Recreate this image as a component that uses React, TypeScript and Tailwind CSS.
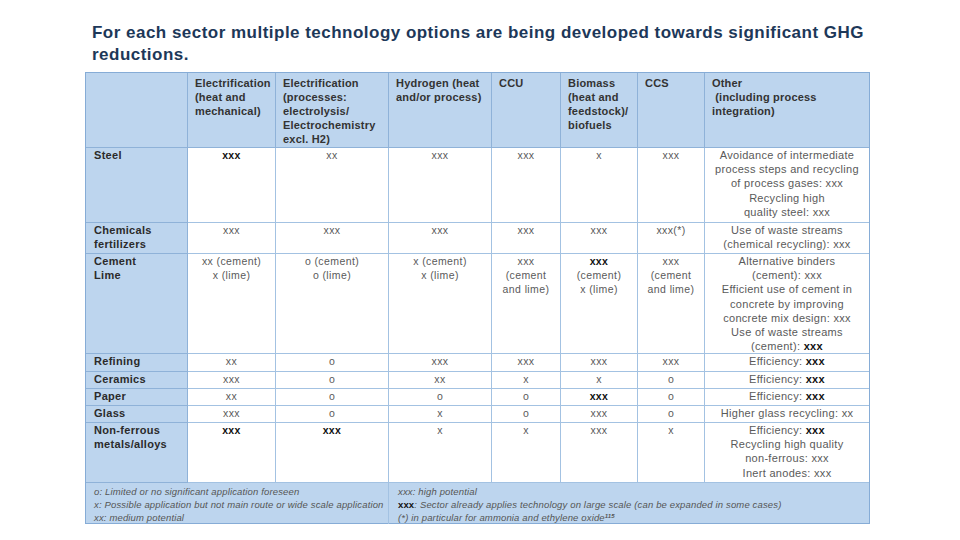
import React from "react";

type Cell = string[];

interface Row {
  label: string[];
  cells: Cell[];
  other: string[];
}

const COLS = "grid-cols-[102px_88px_113px_103px_69px_77px_67px_164px]";
const ROWS = "grid-rows-[75px_75px_31px_100px_18px_17px_17px_17px_60px]";

const headers: string[][] = [
  [],
  ["Electrification", "(heat and", "mechanical)"],
  ["Electrification", "(processes:", "electrolysis/", "Electrochemistry", "excl. H2)"],
  ["Hydrogen (heat", "and/or process)"],
  ["CCU"],
  ["Biomass", "(heat and", "feedstock)/", "biofuels"],
  ["CCS"],
  ["Other", "\u00a0(including process", "integration)"],
];

const rows: Row[] = [
  {
    label: ["Steel"],
    cells: [["**xxx**"], ["xx"], ["xxx"], ["xxx"], ["x"], ["xxx"]],
    other: [
      "Avoidance of intermediate",
      "process steps and recycling",
      "of process gases: xxx",
      "Recycling high",
      "quality steel: xxx",
    ],
  },
  {
    label: ["Chemicals", "fertilizers"],
    cells: [["xxx"], ["xxx"], ["xxx"], ["xxx"], ["xxx"], ["xxx(*)"]],
    other: ["Use of waste streams", "(chemical recycling): xxx"],
  },
  {
    label: ["Cement", "Lime"],
    cells: [
      ["xx (cement)", "x (lime)"],
      ["o (cement)", "o (lime)"],
      ["x (cement)", "x (lime)"],
      ["xxx", "(cement", "and lime)"],
      ["**xxx**", "(cement)", "x (lime)"],
      ["xxx", "(cement", "and lime)"],
    ],
    other: [
      "Alternative binders",
      "(cement): xxx",
      "Efficient use of cement in",
      "concrete by improving",
      "concrete mix design: xxx",
      "Use of waste streams",
      "(cement): **xxx**",
    ],
  },
  {
    label: ["Refining"],
    cells: [["xx"], ["o"], ["xxx"], ["xxx"], ["xxx"], ["xxx"]],
    other: ["Efficiency: **xxx**"],
  },
  {
    label: ["Ceramics"],
    cells: [["xxx"], ["o"], ["xx"], ["x"], ["x"], ["o"]],
    other: ["Efficiency: **xxx**"],
  },
  {
    label: ["Paper"],
    cells: [["xx"], ["o"], ["o"], ["o"], ["**xxx**"], ["o"]],
    other: ["Efficiency: **xxx**"],
  },
  {
    label: ["Glass"],
    cells: [["xxx"], ["o"], ["x"], ["o"], ["xxx"], ["o"]],
    other: ["Higher glass recycling: xx"],
  },
  {
    label: ["Non-ferrous", "metals/alloys"],
    cells: [["**xxx**"], ["**xxx**"], ["x"], ["x"], ["xxx"], ["x"]],
    other: [
      "Efficiency: **xxx**",
      "Recycling high quality",
      "non-ferrous: xxx",
      "Inert anodes: xxx",
    ],
  },
];

// "**xxx**" marks the bold parts of a line
function Line({ text }: { text: string }) {
  const parts = text.split(/(\*\*[^*]+\*\*)/);
  return (
    <div className="whitespace-nowrap">
      {parts.map((p, i) =>
        p.startsWith("**") ? (
          <b key={i} className="font-bold text-[#111]">
            {p.slice(2, -2)}
          </b>
        ) : (
          <span key={i}>{p}</span>
        )
      )}
    </div>
  );
}

export default function App() {
  return (
    <div className="w-[960px] h-[540px] bg-white font-['Liberation_Sans',Arial,sans-serif] overflow-hidden">
      <h1 className="pl-[92px] pt-[22px] text-[17px] leading-[22px] tracking-[0.48px] font-bold text-[#1d3859]">
        For each sector multiple technology options are being developed towards significant GHG
        <br />
        reductions.
      </h1>

      <div className="ml-[85px] mt-[6px] w-[785px] border border-[#86acd6]">
        <div className={`grid ${COLS} ${ROWS}`}>
          {headers.map((h, i) => (
            <div
              key={i}
              className={`bg-[#bdd5ee] border-b border-[#8fb2d8] px-[7px] pt-[3px] text-[11px] leading-[14px] tracking-[0.2px] font-bold text-[#333] ${
                i < 7 ? "border-r" : ""
              }`}
            >
              {h.map((l, j) => (
                <Line key={j} text={l} />
              ))}
            </div>
          ))}

          {rows.map((r, ri) => (
            <React.Fragment key={ri}>
              <div className="bg-[#bdd5ee] border-b border-r border-[#8fb2d8] pl-[8px] pt-[1px] text-[11px] leading-[13.5px] tracking-[0.3px] font-bold text-[#2b2b2b]">
                {r.label.map((l, j) => (
                  <div key={j}>{l}</div>
                ))}
              </div>
              {r.cells.map((c, ci) => (
                <div
                  key={ci}
                  className="bg-white border-b border-r border-[#a3c2e2] flex flex-col items-center text-[10.5px] leading-[14.2px] tracking-[0.4px] text-[#5a5a5a]"
                >
                  {c.map((l, j) => (
                    <Line key={j} text={l} />
                  ))}
                </div>
              ))}
              <div className="bg-white border-b border-[#a3c2e2] flex flex-col items-center text-[11px] leading-[14.2px] tracking-[0.3px] text-[#5a5a5a]">
                {r.other.map((l, j) => (
                  <Line key={j} text={l} />
                ))}
              </div>
            </React.Fragment>
          ))}
        </div>

        <div className="grid grid-cols-[303px_1fr] h-[40px] bg-[#bdd5ee] text-[9.5px] leading-[13px] italic tracking-[0.15px] text-[#555]">
          <div className="border-r border-[#a3c2e2] pl-[8px] pt-[2px]">
            <div>o: Limited or no significant application foreseen</div>
            <div>x: Possible application but not main route or wide scale application</div>
            <div>xx: medium potential</div>
          </div>
          <div className="pl-[9px] pt-[2px]">
            <div>xxx: high potential</div>
            <div>
              <b className="font-bold not-italic text-[#111]">xxx</b>: Sector already applies technology on large scale (can be expanded in some cases)
            </div>
            <div>
              (*) in particular for ammonia and ethylene oxide
              <sup className="text-[6px] font-bold">115</sup>
            </div>
          </div>
        </div>
      </div>
    </div>
  );
}
